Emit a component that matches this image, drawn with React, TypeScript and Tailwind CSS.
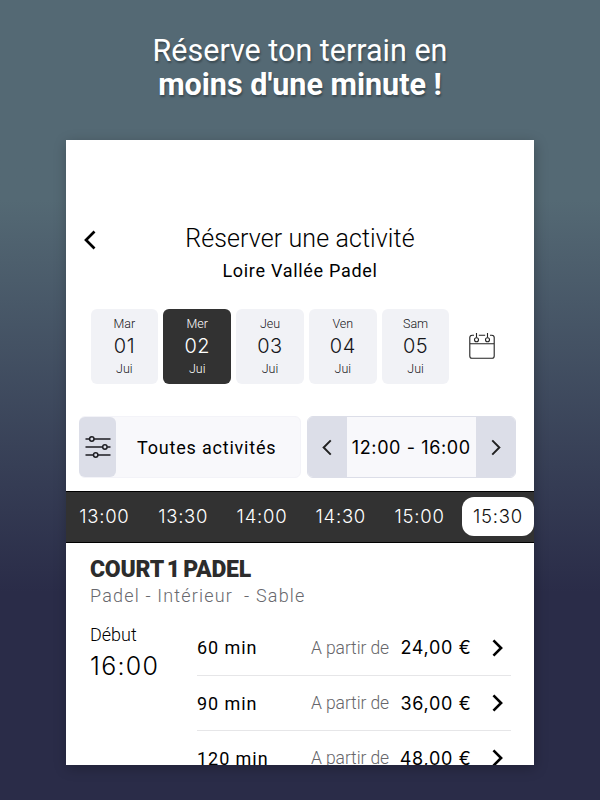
import React, { useState } from "react";
import clsx from "clsx";

interface Day {
  name: string;
  number: string;
  month: string;
}

interface Offer {
  duration: string;
  price: string;
}

const days: Day[] = [
  { name: "Mar", number: "01", month: "Jui" },
  { name: "Mer", number: "02", month: "Jui" },
  { name: "Jeu", number: "03", month: "Jui" },
  { name: "Ven", number: "04", month: "Jui" },
  { name: "Sam", number: "05", month: "Jui" },
];

const slots = ["13:00", "13:30", "14:00", "14:30", "15:00", "15:30"];

const offers: Offer[] = [
  { duration: "60 min", price: "24,00 €" },
  { duration: "90 min", price: "36,00 €" },
  { duration: "120 min", price: "48,00 €" },
];

interface ChevronProps {
  left?: boolean;
  className?: string;
  strokeWidth?: number;
}

const Chevron: React.FC<ChevronProps> = ({ left = false, className, strokeWidth = 2.4 }) => (
  <svg viewBox="0 0 12 20" fill="none" stroke="currentColor" strokeWidth={strokeWidth} className={className}>
    <path d={left ? "M10.5 1.5 2 10l8.5 8.5" : "M1.5 1.5 10 10l-8.5 8.5"} />
  </svg>
);

const CalendarIcon = () => (
  <svg width="26" height="27" viewBox="0 0 26 27" fill="none" stroke="#222" strokeWidth="1.1">
    <path d="M5 2.2H3.2C1.600 2.200.8 3 .8 4.600v18.300c0 1.600.8 2.400 2.400 2.400h19.600c1.600 0 2.400-.8 2.400-2.400V4.600c0-1.600-.8-2.400-2.400-2.400H21M9.800 2.200h6.400M.8 10.700h24.400" />
    <path d="M7.500 0v4.600M18.500 0v4.600" />
    <circle cx="7.500" cy="6.700" r="2" />
    <circle cx="18.500" cy="6.700" r="2" />
  </svg>
);

const FilterIcon = () => (
  <svg width="26" height="24" viewBox="0 0 26 24" fill="none" stroke="#1d1d22" strokeWidth="1.5">
    <path d="M.5 4h4M9 4h16.5M.5 12h17M22.2 12h3.3M.5 20h8M13 20h12.5" />
    <circle cx="6.8" cy="4" r="2.2" />
    <circle cx="19.9" cy="12" r="2.2" />
    <circle cx="10.7" cy="20" r="2.2" />
  </svg>
);

const DayPicker = () => {
  const [selected, setSelected] = useState(1);

  return (
    <div className="mt-[26px] flex items-center pl-[24.5px]">
      <div className="flex gap-[5px]">
        {days.map((day, index) => (
          <button
            key={day.number}
            onClick={() => setSelected(index)}
            className={clsx(
              "flex h-[75px] w-[67.8px] flex-col items-center rounded-md pt-[6px]",
              index === selected ? "bg-[#323232] text-white" : "bg-[#f1f2f6] text-[#16161a]"
            )}
          >
            <span className="text-[12.5px] leading-[17px] font-light">{day.name}</span>
            <span className="font-['Inter',sans-serif] text-[20px] leading-7 font-light tracking-[0.5px]">
              {day.number}
            </span>
            <span className="text-[12.5px] leading-[17px] font-light">{day.month}</span>
          </button>
        ))}
      </div>
      <button className="ml-5">
        <CalendarIcon />
      </button>
    </div>
  );
};

const Filters = () => (
  <div className="mt-8 flex gap-[6px] pl-[13px] text-black">
    <button className="flex h-[62px] w-[221.5px] items-center rounded-md border border-[#f3f3f8] bg-[#f8f8fb]">
      <span className="-ml-px flex h-[60px] w-[37px] items-center justify-center rounded-md bg-[#dcdee8]">
        <FilterIcon />
      </span>
      <span className="flex-1 pr-[2px] text-center text-[18px] tracking-[0.8px]">Toutes activités</span>
    </button>
    <div className="flex h-[62px] w-[209.5px] overflow-hidden rounded-md border border-[#dcdee8] bg-[#f8f8fb]">
      <button className="flex w-[39px] shrink-0 items-center justify-center bg-[#dcdee8]">
        <Chevron left className="h-[17px] w-[10px] text-[#222]" />
      </button>
      <span className="flex flex-1 items-center justify-center font-['Inter',sans-serif] text-[18px] tracking-[0.6px] whitespace-nowrap">
        12:00 - 16:00
      </span>
      <button className="flex w-[39px] shrink-0 items-center justify-center bg-[#dcdee8]">
        <Chevron className="h-[17px] w-[10px] text-[#222]" />
      </button>
    </div>
  </div>
);

const TimeBar = () => {
  const [active, setActive] = useState("15:30");

  return (
    <div className="mt-[12.5px] flex h-[52px] items-center border-y border-black bg-[#323232] font-['Inter',sans-serif] text-[18.5px] font-light tracking-[0.75px]">
      {slots.map((slot) => (
        <button
          key={slot}
          onClick={() => setActive(slot)}
          className={clsx(
            "flex h-[39px] shrink-0 items-center justify-center",
            slot === active ? "ml-[2px] w-[72px] rounded-xl bg-white text-[#111]" : "w-[78.8px] pr-[2px] text-white"
          )}
        >
          {slot}
        </button>
      ))}
    </div>
  );
};

const Court = () => (
  <div className="pt-[15px] pl-[24px]">
    <h2 className="text-[23px] leading-6 font-black tracking-[-0.25px] [word-spacing:-2px] text-[#2c2c2c]">
      COURT 1 PADEL
    </h2>
    <p className="mt-[2px] text-[18px] leading-6 font-light tracking-[1.17px] whitespace-pre text-[#68686d]">
      {"Padel - Intérieur  - Sable"}
    </p>
    <div className="mt-[13px] flex text-black">
      <div className="w-[107px] shrink-0 pt-[2px]">
        <p className="text-[18px] leading-6 font-light">Début</p>
        <p className="mt-1 font-['Inter',sans-serif] text-[25px] leading-[30px] font-light tracking-[1.3px]">16:00</p>
      </div>
      <div className="w-[314px] shrink-0">
        {offers.map((offer) => (
          <button key={offer.duration} className="flex h-[55.4px] w-full items-center border-b border-[#e6e6e8]">
            <span className="text-[18px] tracking-[0.95px]">{offer.duration}</span>
            <span className="ml-auto text-[17.5px] font-light tracking-[-0.1px] text-[#66666a]">A partir de</span>
            <span className="ml-2 w-[74.5px] text-right font-['Inter',sans-serif] text-[18px] tracking-[0.7px] whitespace-nowrap">
              {offer.price}
            </span>
            <Chevron className="mr-[8px] ml-[20.5px] h-[18px] w-[11px]" strokeWidth={2.9} />
          </button>
        ))}
      </div>
    </div>
  </div>
);

export default function App() {
  return (
    <div className="flex h-[800px] w-[600px] flex-col items-center overflow-hidden bg-linear-to-b from-[#546974] from-[25%] to-[#2a2c48] to-[74%] font-['Roboto','Liberation_Sans',sans-serif]">
      <h1 className="h-[139.5px] shrink-0 pt-[33.5px] text-center text-[30.5px] leading-[34.5px] text-white [text-shadow:1px_2px_2px_rgba(0,0,0,0.3)]">
        Réserve ton terrain en
        <br />
        <strong className="font-bold">moins d'une minute !</strong>
      </h1>
      <main className="h-[625.5px] w-[468px] shrink-0 overflow-hidden bg-white shadow-[1px_3px_12px_rgba(0,0,0,0.25)]">
        <header className="relative pt-[83.5px] text-center text-black">
          <button className="absolute top-[90.5px] left-[18px]">
            <Chevron left className="h-5 w-3" strokeWidth={2.7} />
          </button>
          <p className="text-[25px] leading-8 font-light tracking-[0.1px]">Réserver une activité</p>
          <p className="mt-1 text-[18px] leading-6 tracking-[0.7px]">Loire Vallée Padel</p>
        </header>
        <DayPicker />
        <Filters />
        <TimeBar />
        <Court />
      </main>
    </div>
  );
}
